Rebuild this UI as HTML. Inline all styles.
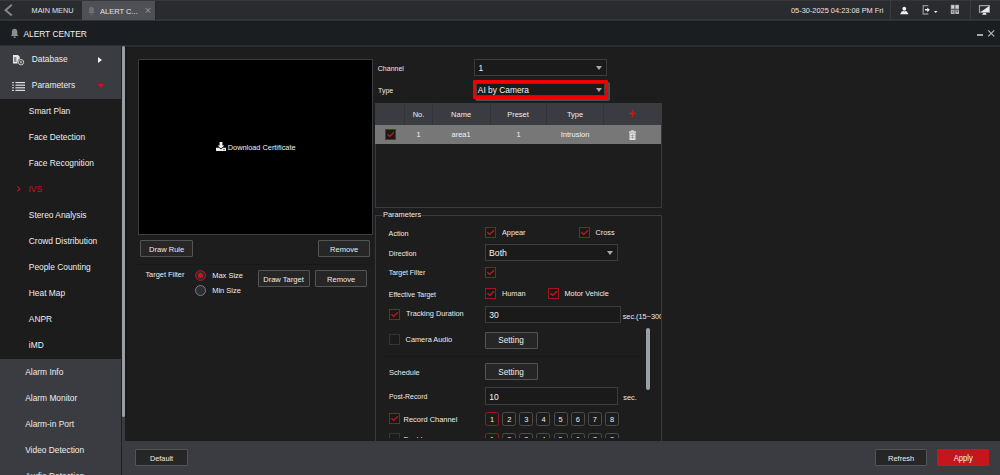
<!DOCTYPE html>
<html><head><meta charset="utf-8">
<style>
*{box-sizing:border-box;margin:0;padding:0}
html,body{width:1000px;height:475px;overflow:hidden;background:#1d1d1d;font-family:"Liberation Sans",sans-serif;color:#e6e6e6}
.a{position:absolute}
.tx{position:absolute;line-height:1;white-space:nowrap;transform:scaleY(1.07);transform-origin:0 85%}
</style></head><body>
<div class="a" style="left:0px;top:0px;width:1000px;height:1px;background:#33383b;"></div>
<div class="a" style="left:0px;top:1px;width:1000px;height:18px;background:#2a2b2f;"></div>
<div class="a" style="left:0px;top:19px;width:1000px;height:2px;background:#333438;"></div>
<div class="a" style="left:0px;top:21px;width:1000px;height:1px;background:#1a1b1e;"></div>
<div class="a" style="left:0px;top:22px;width:1000px;height:23px;background:#1b1e21;"></div>
<div class="a" style="left:0px;top:45px;width:1000px;height:1px;background:#2d2e32;"></div>
<div class="a" style="left:0px;top:46px;width:121px;height:429px;background:#3b3c41;"></div>
<div class="a" style="left:0px;top:99px;width:121px;height:260px;background:#1c1c1c;"></div>
<div class="a" style="left:121px;top:46px;width:1px;height:429px;background:#1f2024;"></div>
<div class="a" style="left:122px;top:46px;width:3px;height:429px;background:#3a3b40;"></div>
<div class="a" style="left:122px;top:46px;width:3px;height:371px;background:#999ea5;border-radius:1.5px"></div>
<div class="a" style="left:125px;top:46px;width:875px;height:395px;background:#1d1d1d;"></div>
<div class="a" style="left:125px;top:45px;width:875px;height:2px;background:#2a2c30;"></div>
<div class="a" style="left:125px;top:47px;width:1.8px;height:370px;background:#181818;"></div>
<div class="a" style="left:125px;top:441px;width:875px;height:34px;background:#3b3c41;"></div>
<svg class="a" style="left:0;top:0" width="20" height="20"><polyline points="11.8,4.8 5.6,10.2 11.8,15.6" fill="none" stroke="#848588" stroke-width="2"/></svg>
<div class="tx" style="left:31.60px;top:6.78px;font-size:7.35px;color:#e2e2e2;">MAIN MENU</div>
<div class="a" style="left:82px;top:1px;width:72.5px;height:19px;background:#4f5055;"></div>
<div class="a" style="left:154.5px;top:1px;width:1px;height:19px;background:#242529;"></div>
<svg class="a" style="left:87px;top:6px" width="10" height="10"><path d="M4.5 0.8c-1.5 0-2.4 1.1-2.4 2.7v2.3L1 7.1h7L6.9 5.8V3.5c0-1.6-0.9-2.7-2.4-2.7z" fill="#6e6f73"/><rect x="3.7" y="7.5" width="1.6" height="1.3" fill="#6e6f73"/></svg>
<div class="tx" style="left:100.00px;top:7.65px;font-size:7.5px;color:#e6e6e6;">ALERT C...</div>
<svg class="a" style="left:144px;top:7px" width="8" height="8"><path d="M1.8 1.2L6.2 5.6M6.2 1.2L1.8 5.6" stroke="#a4a4a4" stroke-width="1"/></svg>
<div class="tx" style="left:791.00px;top:6.74px;font-size:7.4px;color:#e4e4e4;">05-30-2025 04:23:08 PM Fri</div>
<div class="a" style="left:890px;top:1px;width:1px;height:18px;background:#3a3b3f;"></div>
<div class="a" style="left:970px;top:1px;width:1px;height:18px;background:#3a3b3f;"></div>
<svg class="a" style="left:899px;top:5px" width="11" height="11"><ellipse cx="5.3" cy="3.7" rx="1.9" ry="2.05" fill="#f0f0f0"/><path d="M1.2 9.2L2.6 6.6L4.4 6.1L5.3 6.6L6.2 6.1L8 6.6L9.4 9.2z" fill="#f0f0f0"/></svg>
<svg class="a" style="left:921px;top:4px" width="18" height="12"><path d="M7.3 1.6H2.2V10H7.3" fill="none" stroke="#8c8d90" stroke-width="1.3"/><path d="M4 5.1H6.3V3.4L8.8 5.8L6.3 8.2V6.6H4z" fill="#f0f0f0"/><path d="M12.9 6.9h3.6l-1.8 2.2z" fill="#f0f0f0"/></svg>
<svg class="a" style="left:950px;top:4px" width="10" height="11"><rect x="0.8" y="0.8" width="8.2" height="9.2" fill="#b4b4b4"/><path d="M0.8 5.4H9M4.9 0.8V10" stroke="#3a3b3f" stroke-width="0.8"/><rect x="1.8" y="1.8" width="2.2" height="2" fill="#d8d8d8"/><rect x="5.8" y="1.8" width="2.2" height="2" fill="#d0d0d0"/><rect x="2" y="6.6" width="1.2" height="2.4" fill="#707070"/><rect x="6.6" y="6.6" width="1.2" height="1.4" fill="#303030"/></svg>
<svg class="a" style="left:978px;top:4px" width="13" height="12"><rect x="1.5" y="1.6" width="9.8" height="6.6" fill="none" stroke="#a0a0a0" stroke-width="1.2"/><path d="M11.2 2V8.1H2.6z" fill="#ececec"/><path d="M5.2 8.8h2.4l1 2H4.2z" fill="#ececec"/></svg>
<svg class="a" style="left:10px;top:28px" width="10" height="11"><path d="M4.6 0.8c-1.6 0-2.7 1.2-2.7 3v2.7L0.7 8h7.8L7.3 6.5V3.8c0-1.8-1.1-3-2.7-3z" fill="#8c8d90"/><rect x="3.6" y="8.4" width="2" height="1.5" fill="#8c8d90"/></svg>
<div class="tx" style="left:23.40px;top:29.89px;font-size:8.4px;color:#f0f0f0;">ALERT CENTER</div>
<div class="a" style="left:976.8px;top:34px;width:6.6px;height:1.8px;background:#a8a8a8;"></div>
<svg class="a" style="left:986px;top:29px" width="10" height="10"><path d="M2.2 1.3L8.2 7.3M8.2 1.3L2.2 7.3" stroke="#b4b4b4" stroke-width="1.2"/></svg>
<svg class="a" style="left:11px;top:53px" width="16" height="14"><path d="M2 2h5l1.7 1.7V10.6H2z" fill="#e6e6e6"/><rect x="3" y="4" width="2.4" height="5" fill="#8c8c8c"/><circle cx="10" cy="9.2" r="3.4" fill="#3b3c41"/><circle cx="10" cy="9.2" r="2.7" fill="#2a2a2a" stroke="#d8d8d8" stroke-width="0.9"/><path d="M10 7.4v3.6M8.45 8.3l3.1 1.8M8.45 10.1l3.1-1.8" stroke="#cfcfcf" stroke-width="0.6"/></svg>
<div class="tx" style="left:31.80px;top:54.89px;font-size:8.4px;color:#ececec;">Database</div>
<div class="a" style="left:98px;top:56.5px;width:0;height:0;border-top:3px solid transparent;border-bottom:3px solid transparent;border-left:4px solid #f0f0f0"></div>
<svg class="a" style="left:11px;top:81px" width="16" height="11"><rect x="1" y="1.0" width="2" height="1.15" fill="#c8c8c8"/><rect x="4.4" y="1.0" width="9.6" height="1.15" fill="#e4e4e4"/><rect x="1" y="3.6" width="2" height="1.15" fill="#c8c8c8"/><rect x="4.4" y="3.6" width="9.6" height="1.15" fill="#e4e4e4"/><rect x="1" y="6.2" width="2" height="1.15" fill="#c8c8c8"/><rect x="4.4" y="6.2" width="9.6" height="1.15" fill="#e4e4e4"/><rect x="1" y="8.8" width="2" height="1.15" fill="#c8c8c8"/><rect x="4.4" y="8.8" width="9.6" height="1.15" fill="#e4e4e4"/></svg>
<div class="tx" style="left:31.80px;top:80.89px;font-size:8.4px;color:#ececec;">Parameters</div>
<div class="a" style="left:97.5px;top:84px;width:0;height:0;border-left:3px solid transparent;border-right:3px solid transparent;border-top:4px solid #d0121a"></div>
<div class="tx" style="left:28.80px;top:106.89px;font-size:8.4px;color:#ececec;">Smart Plan</div>
<div class="tx" style="left:28.80px;top:132.89px;font-size:8.4px;color:#ececec;">Face Detection</div>
<div class="tx" style="left:28.80px;top:158.89px;font-size:8.4px;color:#ececec;">Face Recognition</div>
<div class="tx" style="left:28.40px;top:184.80px;font-size:8.5px;color:#c8161d;">IVS</div>
<svg class="a" style="left:16px;top:185px" width="6" height="8"><path d="M1.3 1.4L4 3.9L1.3 6.4" fill="none" stroke="#c8161d" stroke-width="1.1"/></svg>
<div class="tx" style="left:28.80px;top:210.89px;font-size:8.4px;color:#ececec;">Stereo Analysis</div>
<div class="tx" style="left:28.80px;top:236.89px;font-size:8.4px;color:#ececec;">Crowd Distribution</div>
<div class="tx" style="left:28.80px;top:262.89px;font-size:8.4px;color:#ececec;">People Counting</div>
<div class="tx" style="left:28.80px;top:288.89px;font-size:8.4px;color:#ececec;">Heat Map</div>
<div class="tx" style="left:28.80px;top:314.89px;font-size:8.4px;color:#ececec;">ANPR</div>
<div class="tx" style="left:28.80px;top:340.89px;font-size:8.4px;color:#ececec;">iMD</div>
<div class="tx" style="left:25.20px;top:367.89px;font-size:8.4px;color:#ececec;">Alarm Info</div>
<div class="tx" style="left:25.20px;top:393.89px;font-size:8.4px;color:#ececec;">Alarm Monitor</div>
<div class="tx" style="left:25.20px;top:419.89px;font-size:8.4px;color:#ececec;">Alarm-in Port</div>
<div class="tx" style="left:25.20px;top:445.89px;font-size:8.4px;color:#ececec;">Video Detection</div>
<div class="tx" style="left:25.20px;top:471.89px;font-size:8.4px;color:#ececec;">Audio Detection</div>
<div class="a" style="left:138px;top:59px;width:235px;height:176px;background:#000;border:1px solid #3b3d43"></div>
<svg class="a" style="left:215px;top:141px" width="12" height="11"><path d="M4.6 1h2.8v3.4h2L6 7.6L2.6 4.4h2z" fill="#f2f2f2"/><path d="M1 6.8h3.2L6 8.6l1.8-1.8H11V10H1z" fill="#f2f2f2"/><rect x="8.4" y="8.2" width="1.2" height="0.9" fill="#000"/></svg>
<div class="tx" style="left:227.80px;top:143.78px;font-size:7.35px;color:#f0f0f0;">Download Certificate</div>
<div class="a" style="left:140px;top:240px;width:53px;height:17px;background:#262626;border:1px solid #545454;border-radius:1px"></div>
<div class="tx" style="left:148.98px;top:245.61px;font-size:7.55px;color:#ececec;">Draw Rule</div>
<div class="a" style="left:318px;top:240px;width:52px;height:17px;background:#262626;border:1px solid #545454;border-radius:1px"></div>
<div class="tx" style="left:330.05px;top:245.61px;font-size:7.55px;color:#ececec;">Remove</div>
<div class="a" style="left:134px;top:264px;width:238px;height:1px;background:#191919;"></div>
<div class="tx" style="left:145.40px;top:270.74px;font-size:7.4px;color:#ececec;">Target Filter</div>
<div class="a" style="left:195px;top:270px;width:11px;height:11px;background:#2b2e33;border-radius:50%;border:1px solid #b5171d"></div>
<div class="a" style="left:198px;top:273px;width:5px;height:5px;background:#d0121a;border-radius:50%"></div>
<div class="tx" style="left:212.20px;top:271.65px;font-size:7.5px;color:#ececec;">Max Size</div>
<div class="a" style="left:195px;top:285px;width:11px;height:11px;background:#2b2e33;border-radius:50%;border:1px solid #7a7b7e"></div>
<div class="tx" style="left:212.20px;top:286.65px;font-size:7.5px;color:#ececec;">Min Size</div>
<div class="a" style="left:258px;top:270px;width:52px;height:17px;background:#262626;border:1px solid #545454;border-radius:1px"></div>
<div class="tx" style="left:263.21px;top:275.61px;font-size:7.55px;color:#ececec;">Draw Target</div>
<div class="a" style="left:315px;top:270px;width:52px;height:17px;background:#262626;border:1px solid #545454;border-radius:1px"></div>
<div class="tx" style="left:327.05px;top:275.61px;font-size:7.55px;color:#ececec;">Remove</div>
<div class="tx" style="left:377.80px;top:64.57px;font-size:7.0px;color:#ececec;">Channel</div>
<div class="a" style="left:474px;top:59px;width:133px;height:17px;background:#1a1a1a;border:1px solid #3c3c3c"></div>
<div class="tx" style="left:478.50px;top:63.89px;font-size:8.4px;color:#f4f4f4;">1</div>
<div class="a" style="left:596px;top:66.3px;width:0;height:0;border-left:3.1px solid transparent;border-right:3.1px solid transparent;border-top:4.1px solid #a9a9a9"></div>
<div class="tx" style="left:378.00px;top:86.57px;font-size:7.0px;color:#ececec;">Type</div>
<div class="a" style="left:474.7px;top:82px;width:135.6px;height:18.7px;background:#4a4e4f;border-radius:2px"></div>
<div class="a" style="left:472.7px;top:80px;width:135.6px;height:19px;background:#1a1a1a;border:3.3px solid #f00000;border-radius:1px"></div>
<div class="a" style="left:475.5px;top:83.3px;width:129.5px;height:12.4px;background:#1a1a1a;border:1px solid #3f4344"></div>
<div class="tx" style="left:477.80px;top:85.89px;font-size:8.4px;color:#f4f4f4;">AI by Camera</div>
<div class="a" style="left:596.2px;top:88px;width:0;height:0;border-left:3.1px solid transparent;border-right:3.1px solid transparent;border-top:4.1px solid #a9a9a9"></div>
<div class="a" style="left:375px;top:103px;width:286.5px;height:105px;background:#1d1d1d;border:1.5px solid #383a3f;border-top:none;border-radius:0 0 1px 1px"></div>
<div class="a" style="left:375px;top:103px;width:286px;height:22px;background:#3b3c41;"></div>
<div class="a" style="left:404px;top:103px;width:1px;height:22px;background:#33343a;"></div>
<div class="a" style="left:432px;top:103px;width:1px;height:22px;background:#33343a;"></div>
<div class="a" style="left:490px;top:103px;width:1px;height:22px;background:#33343a;"></div>
<div class="a" style="left:546px;top:103px;width:1px;height:22px;background:#33343a;"></div>
<div class="a" style="left:603px;top:103px;width:1px;height:22px;background:#33343a;"></div>
<div class="a" style="left:375px;top:125px;width:286px;height:19px;background:#777777;"></div>
<div class="tx" style="left:412.71px;top:110.65px;font-size:7.5px;color:#ececec;">No.</div>
<div class="tx" style="left:451.08px;top:110.65px;font-size:7.5px;color:#ececec;">Name</div>
<div class="tx" style="left:507.20px;top:110.65px;font-size:7.5px;color:#ececec;">Preset</div>
<div class="tx" style="left:566.96px;top:110.65px;font-size:7.5px;color:#ececec;">Type</div>
<svg class="a" style="left:628px;top:109.3px" width="9" height="9"><path d="M4.5 1v7M1 4.5h7" stroke="#d8101a" stroke-width="1.6"/></svg>
<div class="a" style="left:385px;top:129px;width:11px;height:11px;border:1px solid #a3151b;background:#191919"><svg width="11" height="11" style="position:absolute;left:-1px;top:-1px"><path d="M2.4 5.3L4.7 7.5L9 3.3" fill="none" stroke="#d4141c" stroke-width="1.25"/></svg></div>
<div class="tx" style="left:416.50px;top:130.65px;font-size:7.5px;color:#f4f4f4;">1</div>
<div class="tx" style="left:451.49px;top:130.65px;font-size:7.5px;color:#f4f4f4;">area1</div>
<div class="tx" style="left:516.50px;top:130.65px;font-size:7.5px;color:#f4f4f4;">1</div>
<div class="tx" style="left:560.70px;top:130.65px;font-size:7.5px;color:#f4f4f4;">Intrusion</div>
<svg class="a" style="left:628px;top:130px" width="9" height="11"><rect x="3" y="0.4" width="3" height="1.2" fill="#e0e0e0"/><rect x="0.9" y="1.4" width="7.2" height="1.3" fill="#e8e8e8"/><path d="M1.5 3.2h6v6.2c0 0.4-0.3 0.6-0.6 0.6H2.1c-0.3 0-0.6-0.2-0.6-0.6z" fill="#e4e4e4"/><path d="M2.3 5.6h4.4M2.3 7.6h4.4M4.5 4.2v4.6" stroke="#8a8a8a" stroke-width="0.6"/></svg>
<div class="a" style="left:375px;top:214.5px;width:286.5px;height:226.5px;background:transparent;border:1.5px solid #383a3f;border-bottom:none;border-radius:1px 1px 0 0"></div>
<div class="a" style="left:382.3px;top:212px;width:39.5px;height:6px;background:#1d1d1d;"></div>
<div class="tx" style="left:383.00px;top:210.74px;font-size:7.4px;color:#ececec;">Parameters</div>
<div class="a" style="left:376px;top:219px;width:285px;height:218.5px;overflow:hidden">
<div class="tx" style="left:12.60px;top:10.91px;font-size:7.2px;color:#ececec;">Action</div>
<div class="a" style="left:109.3px;top:8px;width:11px;height:11px;border:1px solid #a3151b;background:#191919"><svg width="11" height="11" style="position:absolute;left:-1px;top:-1px"><path d="M2.4 5.3L4.7 7.5L9 3.3" fill="none" stroke="#d4141c" stroke-width="1.25"/></svg></div>
<div class="tx" style="left:126.00px;top:9.82px;font-size:7.3px;color:#ececec;">Appear</div>
<div class="a" style="left:203px;top:8px;width:11px;height:11px;border:1px solid #a3151b;background:#191919"><svg width="11" height="11" style="position:absolute;left:-1px;top:-1px"><path d="M2.4 5.3L4.7 7.5L9 3.3" fill="none" stroke="#d4141c" stroke-width="1.25"/></svg></div>
<div class="tx" style="left:219.60px;top:9.82px;font-size:7.3px;color:#ececec;">Cross</div>
<div class="tx" style="left:12.80px;top:31.07px;font-size:7.0px;color:#ececec;">Direction</div>
<div class="a" style="left:109px;top:25px;width:133px;height:17px;background:#1a1a1a;border:1px solid #3c3c3c"></div>
<div class="tx" style="left:113.00px;top:29.64px;font-size:8.7px;color:#f4f4f4;">Both</div>
<div class="a" style="left:231px;top:32.3px;width:0;height:0;border-left:3.1px solid transparent;border-right:3.1px solid transparent;border-top:4.1px solid #a9a9a9"></div>
<div class="tx" style="left:12.80px;top:51.16px;font-size:6.9px;color:#ececec;">Target Filter</div>
<div class="a" style="left:109.3px;top:47.5px;width:11px;height:11px;border:1px solid #a3151b;background:#191919"><svg width="11" height="11" style="position:absolute;left:-1px;top:-1px"><path d="M2.4 5.3L4.7 7.5L9 3.3" fill="none" stroke="#d4141c" stroke-width="1.25"/></svg></div>
<div class="tx" style="left:12.80px;top:73.16px;font-size:6.9px;color:#ececec;">Effective Target</div>
<div class="a" style="left:109.3px;top:69px;width:11px;height:11px;border:1px solid #a3151b;background:#191919"><svg width="11" height="11" style="position:absolute;left:-1px;top:-1px"><path d="M2.4 5.3L4.7 7.5L9 3.3" fill="none" stroke="#d4141c" stroke-width="1.25"/></svg></div>
<div class="tx" style="left:126.00px;top:71.32px;font-size:7.3px;color:#ececec;">Human</div>
<div class="a" style="left:172.3px;top:69px;width:11px;height:11px;border:1px solid #a3151b;background:#191919"><svg width="11" height="11" style="position:absolute;left:-1px;top:-1px"><path d="M2.4 5.3L4.7 7.5L9 3.3" fill="none" stroke="#d4141c" stroke-width="1.25"/></svg></div>
<div class="tx" style="left:188.50px;top:71.32px;font-size:7.3px;color:#ececec;">Motor Vehicle</div>
<div class="a" style="left:13px;top:89.5px;width:11px;height:11px;border:1px solid #a3151b;background:#191919"><svg width="11" height="11" style="position:absolute;left:-1px;top:-1px"><path d="M2.4 5.3L4.7 7.5L9 3.3" fill="none" stroke="#d4141c" stroke-width="1.25"/></svg></div>
<div class="tx" style="left:30.00px;top:90.78px;font-size:7.35px;color:#ececec;">Tracking Duration</div>
<div class="a" style="left:109px;top:87px;width:136px;height:17px;background:#1a1a1a;border:1px solid #3c3c3c"></div>
<div class="tx" style="left:113.30px;top:91.80px;font-size:8.5px;color:#f4f4f4;">30</div>
<div class="tx" style="left:246.70px;top:93.82px;font-size:7.3px;color:#ececec;">sec.(15~300)</div>
<div class="a" style="left:13px;top:115.2px;width:11px;height:11px;border:1px solid #343538;background:#1b1b1b"></div>
<div class="tx" style="left:29.60px;top:116.78px;font-size:7.35px;color:#ececec;">Camera Audio</div>
<div class="a" style="left:109px;top:113px;width:52.5px;height:16.5px;background:#262626;border:1px solid #545454;border-radius:1px"></div>
<div class="tx" style="left:122.28px;top:118.06px;font-size:8.2px;color:#ececec;">Setting</div>
<div class="a" style="left:4px;top:137px;width:262px;height:1px;background:#191919;"></div>
<div class="tx" style="left:13.00px;top:149.78px;font-size:7.35px;color:#ececec;">Schedule</div>
<div class="a" style="left:109px;top:144px;width:52.5px;height:17px;background:#262626;border:1px solid #545454;border-radius:1px"></div>
<div class="tx" style="left:122.28px;top:150.06px;font-size:8.2px;color:#ececec;">Setting</div>
<div class="tx" style="left:13.00px;top:175.16px;font-size:6.9px;color:#ececec;">Post-Record</div>
<div class="a" style="left:109px;top:168px;width:133px;height:18px;background:#1a1a1a;border:1px solid #3c3c3c"></div>
<div class="tx" style="left:113.30px;top:173.80px;font-size:8.5px;color:#f4f4f4;">10</div>
<div class="tx" style="left:247.30px;top:174.82px;font-size:7.3px;color:#ececec;">sec.</div>
<div class="a" style="left:13px;top:193.8px;width:11px;height:11px;border:1px solid #a3151b;background:#191919"><svg width="11" height="11" style="position:absolute;left:-1px;top:-1px"><path d="M2.4 5.3L4.7 7.5L9 3.3" fill="none" stroke="#d4141c" stroke-width="1.25"/></svg></div>
<div class="tx" style="left:27.60px;top:196.69px;font-size:7.45px;color:#ececec;">Record Channel</div>
<div class="a" style="left:109.0px;top:193px;width:14px;height:14px;background:#1c1c1c;border:1px solid #a3151b;border-radius:2.5px"></div>
<div class="tx" style="left:114.00px;top:196.65px;font-size:7.5px;color:#ececec;">1</div>
<div class="a" style="left:126.14px;top:193px;width:14px;height:14px;background:#1c1c1c;border:1px solid #4d4d4d;border-radius:2.5px"></div>
<div class="tx" style="left:131.14px;top:196.65px;font-size:7.5px;color:#ececec;">2</div>
<div class="a" style="left:143.28px;top:193px;width:14px;height:14px;background:#1c1c1c;border:1px solid #4d4d4d;border-radius:2.5px"></div>
<div class="tx" style="left:148.28px;top:196.65px;font-size:7.5px;color:#ececec;">3</div>
<div class="a" style="left:160.42px;top:193px;width:14px;height:14px;background:#1c1c1c;border:1px solid #4d4d4d;border-radius:2.5px"></div>
<div class="tx" style="left:165.42px;top:196.65px;font-size:7.5px;color:#ececec;">4</div>
<div class="a" style="left:177.56px;top:193px;width:14px;height:14px;background:#1c1c1c;border:1px solid #4d4d4d;border-radius:2.5px"></div>
<div class="tx" style="left:182.56px;top:196.65px;font-size:7.5px;color:#ececec;">5</div>
<div class="a" style="left:194.7px;top:193px;width:14px;height:14px;background:#1c1c1c;border:1px solid #4d4d4d;border-radius:2.5px"></div>
<div class="tx" style="left:199.70px;top:196.65px;font-size:7.5px;color:#ececec;">6</div>
<div class="a" style="left:211.84px;top:193px;width:14px;height:14px;background:#1c1c1c;border:1px solid #4d4d4d;border-radius:2.5px"></div>
<div class="tx" style="left:216.84px;top:196.65px;font-size:7.5px;color:#ececec;">7</div>
<div class="a" style="left:228.98px;top:193px;width:14px;height:14px;background:#1c1c1c;border:1px solid #4d4d4d;border-radius:2.5px"></div>
<div class="tx" style="left:233.98px;top:196.65px;font-size:7.5px;color:#ececec;">8</div>
<div class="a" style="left:109.0px;top:213.5px;width:14px;height:14px;background:#1c1c1c;border:1px solid #a3151b;border-radius:2.5px"></div>
<div class="tx" style="left:114.00px;top:217.15px;font-size:7.5px;color:#ececec;">1</div>
<div class="a" style="left:126.14px;top:213.5px;width:14px;height:14px;background:#1c1c1c;border:1px solid #4d4d4d;border-radius:2.5px"></div>
<div class="tx" style="left:131.14px;top:217.15px;font-size:7.5px;color:#ececec;">2</div>
<div class="a" style="left:143.28px;top:213.5px;width:14px;height:14px;background:#1c1c1c;border:1px solid #4d4d4d;border-radius:2.5px"></div>
<div class="tx" style="left:148.28px;top:217.15px;font-size:7.5px;color:#ececec;">3</div>
<div class="a" style="left:160.42px;top:213.5px;width:14px;height:14px;background:#1c1c1c;border:1px solid #4d4d4d;border-radius:2.5px"></div>
<div class="tx" style="left:165.42px;top:217.15px;font-size:7.5px;color:#ececec;">4</div>
<div class="a" style="left:177.56px;top:213.5px;width:14px;height:14px;background:#1c1c1c;border:1px solid #4d4d4d;border-radius:2.5px"></div>
<div class="tx" style="left:182.56px;top:217.15px;font-size:7.5px;color:#ececec;">5</div>
<div class="a" style="left:194.7px;top:213.5px;width:14px;height:14px;background:#1c1c1c;border:1px solid #4d4d4d;border-radius:2.5px"></div>
<div class="tx" style="left:199.70px;top:217.15px;font-size:7.5px;color:#ececec;">6</div>
<div class="a" style="left:211.84px;top:213.5px;width:14px;height:14px;background:#1c1c1c;border:1px solid #4d4d4d;border-radius:2.5px"></div>
<div class="tx" style="left:216.84px;top:217.15px;font-size:7.5px;color:#ececec;">7</div>
<div class="a" style="left:228.98px;top:213.5px;width:14px;height:14px;background:#1c1c1c;border:1px solid #4d4d4d;border-radius:2.5px"></div>
<div class="tx" style="left:233.98px;top:217.15px;font-size:7.5px;color:#ececec;">8</div>
<div class="a" style="left:13px;top:214.2px;width:11px;height:11px;border:1px solid #343538;background:#1b1b1b"></div>
<div class="tx" style="left:27.60px;top:216.74px;font-size:7.4px;color:#ececec;">Enable</div>
<div class="a" style="left:270px;top:109px;width:3.5px;height:62px;background:#9ba0a6;border-radius:2px"></div>
</div>
<div class="a" style="left:135px;top:448.8px;width:53px;height:17.2px;background:#262626;border:1px solid #545454;border-radius:1px"></div>
<div class="tx" style="left:149.89px;top:454.78px;font-size:7.35px;color:#ececec;">Default</div>
<div class="a" style="left:874.8px;top:448.8px;width:52.5px;height:17.2px;background:#262626;border:1px solid #545454;border-radius:1px"></div>
<div class="tx" style="left:888.01px;top:454.65px;font-size:7.5px;color:#ececec;">Refresh</div>
<div class="a" style="left:937.3px;top:449px;width:52.2px;height:17px;background:#c4161c;border:1px solid #c4161c;border-radius:1px"></div>
<div class="tx" style="left:953.80px;top:454.57px;font-size:7.6px;color:#f6f6f6;">Apply</div>
</body></html>
